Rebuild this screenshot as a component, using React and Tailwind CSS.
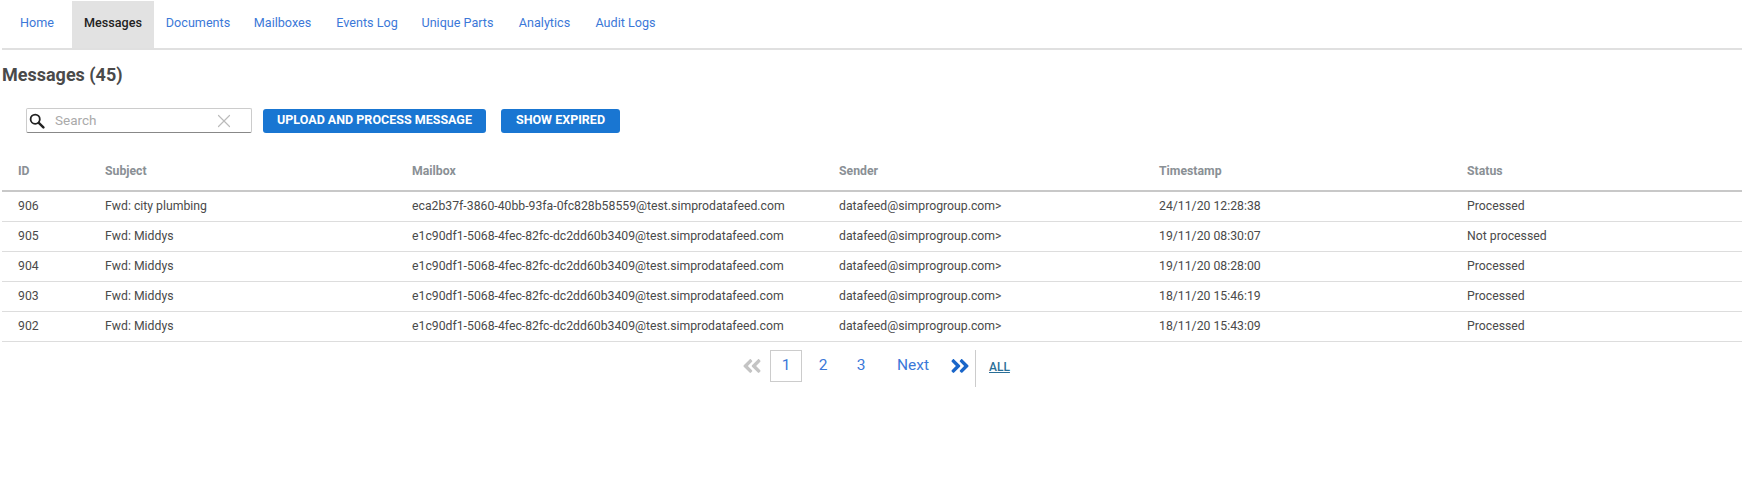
import React from 'react';
import { X } from 'lucide-react';
import { FaAngleDoubleLeft, FaAngleDoubleRight } from 'react-icons/fa';

const tabs = [
    { name: 'Home', cls: 'w-[70px]' },
    { name: 'Messages', cls: 'w-[82px]', active: true },
    { name: 'Documents', cls: 'w-[88px]' },
    { name: 'Mailboxes', cls: 'w-[81px]' },
    { name: 'Events Log', cls: 'w-[88px]' },
    { name: 'Unique Parts', cls: 'w-[93px]' },
    { name: 'Analytics', cls: 'w-[81px]' },
    { name: 'Audit Logs', cls: 'w-[81px]' },
];

const rows = [
    ['906', 'Fwd: city plumbing', 'eca2b37f-3860-40bb-93fa-0fc828b58559@test.simprodatafeed.com', 'datafeed@simprogroup.com>', '24/11/20 12:28:38', 'Processed'],
    ['905', 'Fwd: Middys', 'e1c90df1-5068-4fec-82fc-dc2dd60b3409@test.simprodatafeed.com', 'datafeed@simprogroup.com>', '19/11/20 08:30:07', 'Not processed'],
    ['904', 'Fwd: Middys', 'e1c90df1-5068-4fec-82fc-dc2dd60b3409@test.simprodatafeed.com', 'datafeed@simprogroup.com>', '19/11/20 08:28:00', 'Processed'],
    ['903', 'Fwd: Middys', 'e1c90df1-5068-4fec-82fc-dc2dd60b3409@test.simprodatafeed.com', 'datafeed@simprogroup.com>', '18/11/20 15:46:19', 'Processed'],
    ['902', 'Fwd: Middys', 'e1c90df1-5068-4fec-82fc-dc2dd60b3409@test.simprodatafeed.com', 'datafeed@simprogroup.com>', '18/11/20 15:43:09', 'Processed'],
];

const columns = ['ID', 'Subject', 'Mailbox', 'Sender', 'Timestamp', 'Status'];
const widths = ['w-[87px]', 'w-[307px]', 'w-[427px]', 'w-[320px]', 'w-[308px]', 'flex-1'];

const SearchIcon = () => (
    <svg width="16" height="16" viewBox="0 0 16 16" fill="none" stroke="#222" strokeLinecap="round">
        <circle cx="6.2" cy="6.2" r="4.6" strokeWidth="1.8" />
        <path d="M9.8 9.8 14.4 14.4" strokeWidth="2.4" />
    </svg>
);

const App = () => (
    <div className="h-[477px] bg-white font-['Roboto',sans-serif] overflow-hidden">
        <nav className="flex h-[50px] ml-[2px] pt-[1px] border-b-2 border-[#e0e0e0]">
            {tabs.map((tab) => (
                <a key={tab.name} className={`${tab.cls} flex items-center justify-center pb-[2px] text-[12.6px] ${tab.active ? 'bg-[#e2e2e2] text-[#222] font-medium' : 'text-[#3b78d8]'}`}>
                    {tab.name}
                </a>
            ))}
        </nav>

        <h1 className="ml-[2px] mt-[15px] text-[18px] leading-[20px] font-bold text-[#4a4a4a]">Messages (45)</h1>

        <div className="flex items-center ml-[26px] mt-[23px]">
            <div className="flex items-center w-[226px] h-[25px] border border-[#ccc] border-b-[#888] rounded-[2px] pl-[2px] pr-[16px]">
                <SearchIcon />
                <span className="ml-[10px] flex-1 text-[13.5px] text-[#aaa]">Search</span>
                <X size={22} color="#bbb" strokeWidth={1.3} />
            </div>
            <button className="ml-[11px] w-[223px] h-[24px] bg-[#1976d2] rounded-[3px] text-white text-[12.5px] font-bold">UPLOAD AND PROCESS MESSAGE</button>
            <button className="ml-[15px] w-[119px] h-[24px] bg-[#1976d2] rounded-[3px] text-white text-[12.5px] font-bold">SHOW EXPIRED</button>
        </div>

        <div className="ml-[2px] mt-[19px]">
            <div className="flex h-[40px] items-center border-b-2 border-[#c8c8c8] pl-[16px] text-[12.25px] font-bold text-[#8a9095]">
                {columns.map((col, i) => (
                    <div key={col} className={widths[i]}>{col}</div>
                ))}
            </div>
            {rows.map((row) => (
                <div key={row[0]} className="flex h-[30px] items-center border-b border-[#ddd] pl-[16px] text-[12.25px] text-[#4a4a4a]">
                    {row.map((cell, i) => (
                        <div key={i} className={`${widths[i]} whitespace-nowrap`}>{cell}</div>
                    ))}
                </div>
            ))}
        </div>

        <div className="flex items-center h-[32px] mt-[8px] ml-[741px] text-[15.5px] text-[#3b78d8]">
            <FaAngleDoubleLeft size={22} color="#c4c4c4" />
            <span className="ml-[7px] w-[32px] h-[32px] flex items-center justify-center border border-[#ccc]">1</span>
            <span className="w-[42px] text-center">2</span>
            <span className="w-[34px] text-center">3</span>
            <span className="w-[70px] text-center">Next</span>
            <FaAngleDoubleRight size={22} color="#1a66c9" className="ml-[1px]" />
            <div className="ml-[4px] h-[37px] self-start border-l border-[#ccc]" />
            <span className="ml-[13px] mt-[2px] text-[12px] font-medium underline text-[#2a6f97]">ALL</span>
        </div>
    </div>
);

export default App;
